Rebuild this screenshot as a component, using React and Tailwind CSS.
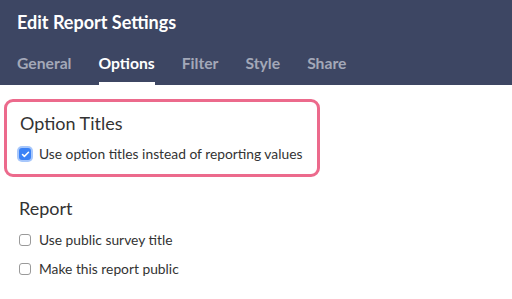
import { Check } from "lucide-react";

function Box({ checked }) {
  if (checked) {
    return (
      <span className="flex h-[12px] w-[12px] shrink-0 items-center justify-center rounded-[3px] bg-[#3b82f6] shadow-[0_0_0_2px_rgba(59,130,246,0.45)]">
        <Check className="h-[9px] w-[9px] text-white" strokeWidth={4} />
      </span>
    );
  }
  return <span className="h-[12px] w-[12px] shrink-0 rounded-[3px] border border-[#9a9a9a] bg-white" />;
}

export default function App() {
  const tabs = ["General", "Options", "Filter", "Style", "Share"];
  return (
    <div className="h-[299px] w-[512px] overflow-hidden bg-white font-['Lato',sans-serif]">
      <div className="flex h-[85px] flex-col bg-[#3d4663] px-[17px]">
        <h1 className="pt-[10px] text-[18px] font-bold leading-[24px] text-white">Edit Report Settings</h1>
        <div className="mt-auto flex gap-[27px]">
          {tabs.map((t) => (
            <div
              key={t}
              className={
                t === "Options"
                  ? "border-b-[3px] border-white pb-[9px] text-[15.7px] font-bold leading-[20px] text-white"
                  : "border-b-[3px] border-transparent pb-[9px] text-[15.7px] font-bold leading-[20px] text-[#a3a8b8]"
              }
            >
              {t}
            </div>
          ))}
        </div>
      </div>
      <div className="ml-[4px] mt-[14px] w-[316px] rounded-[9px] border-[3px] border-[#ec6a8c] px-[12px] pb-[11px] pt-[9px]">
        <h2 className="pl-[1px] text-[18px] leading-[24px] text-[#333]">Option Titles</h2>
        <label className="mt-[10px] flex items-center gap-[8px] whitespace-nowrap text-[13.8px] leading-[18px] text-[#333]">
          <Box checked />
          Use option titles instead of reporting values
        </label>
      </div>
      <div className="px-[19px] pt-[19px]">
        <h2 className="text-[18px] leading-[24px] text-[#333]">Report</h2>
        <label className="mt-[11px] flex items-center gap-[8px] whitespace-nowrap text-[13.8px] leading-[18px] text-[#333]">
          <Box />
          Use public survey title
        </label>
        <label className="mt-[11px] flex items-center gap-[8px] whitespace-nowrap text-[13.8px] leading-[18px] text-[#333]">
          <Box />
          Make this report public
        </label>
      </div>
    </div>
  );
}
